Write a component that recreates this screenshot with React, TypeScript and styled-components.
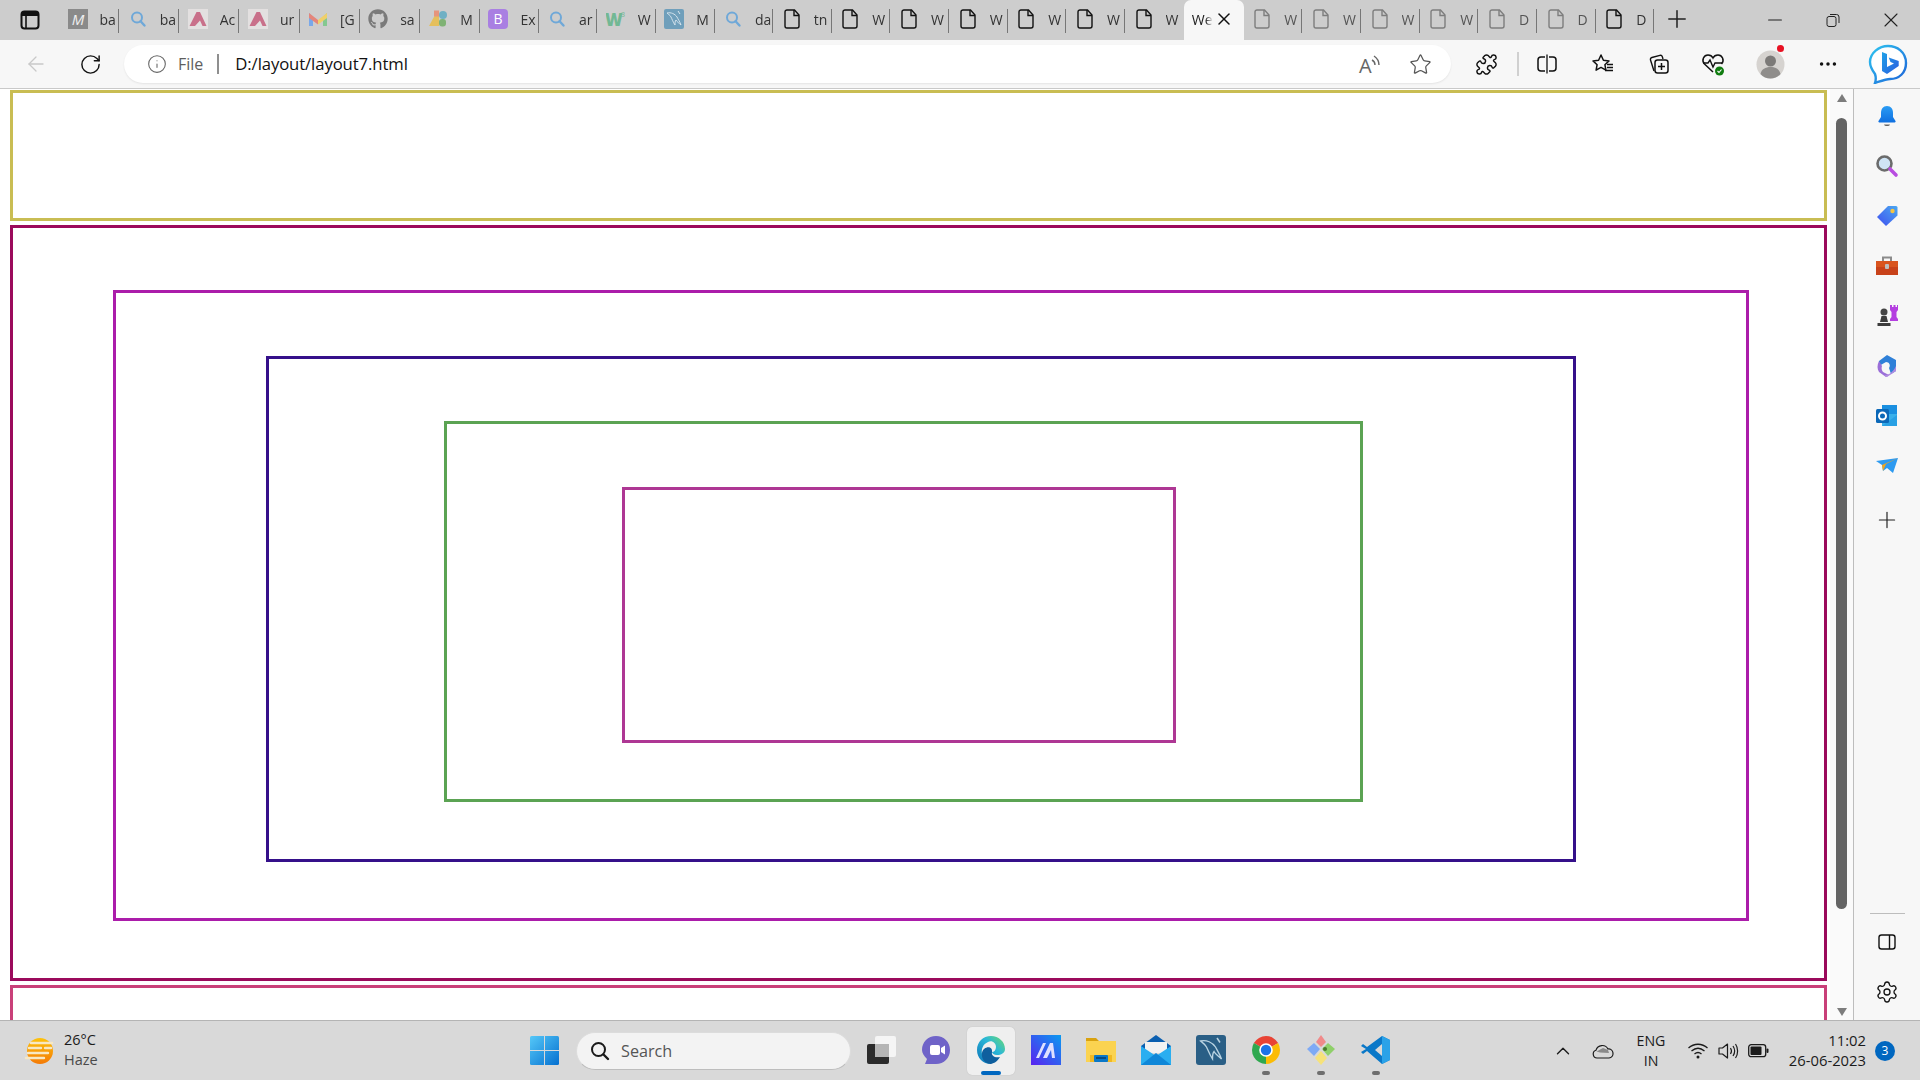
import React from 'react';
import styled, { createGlobalStyle } from 'styled-components';
import { ArrowLeft, RotateCw, Info, Star, Puzzle, MoreHorizontal, Plus, Minus, X, ChevronUp, Settings } from 'lucide-react';
import { FaGithub } from 'react-icons/fa';

const Global = createGlobalStyle`
  html, body { margin: 0; padding: 0; width: 1920px; height: 1080px; overflow: hidden; background: #fff; }
  * { box-sizing: border-box; }
  svg { display: block; flex: none; }
`;

const Screen = styled.div`
  width: 1920px; height: 1080px; display: flex; flex-direction: column; overflow: hidden;
  font-family: "Open Sans", "Noto Sans", sans-serif; color: #1b1b1b;
`;

/* ---------- tab strip ---------- */
const TabStrip = styled.div`display: flex; height: 40px; background: #cdcdcd; flex: none;`;
const StripButton = styled.div`
  width: 59px; display: flex; align-items: center; justify-content: center;
`;
const Tabs = styled.div`display: flex; width: 1595px; flex: none;`;
const Tab = styled.div<{ $dim?: boolean; $sep?: boolean; $wide?: boolean }>`
  width: ${p => (p.$wide ? 60.14 : 58.67)}px; flex: none; position: relative; display: flex; align-items: center; gap: 12px;
  padding: 0 1px 2px 8.5px; overflow: hidden; white-space: nowrap; font-size: 14px;
  color: ${p => (p.$dim ? '#555' : '#333')};
  & > svg { opacity: ${p => (p.$dim ? 0.42 : 1)}; }
  &::after {
    content: ${p => (p.$sep === false ? 'none' : '""')}; position: absolute; right: 0; top: 9px; bottom: 7px; width: 1px; background: #777;
  }
`;
const TabLabel = styled.span`
  flex: 1; min-width: 0; overflow: hidden;
  mask-image: linear-gradient(to right, #000 85%, transparent);
`;
const ActiveTab = styled.div`
  width: 60px; flex: none; display: flex; align-items: center; justify-content: space-between;
  padding: 0 9.5px 2px 8px; background: #f7f7f7; border-radius: 7px 7px 0 0; font-size: 14px; color: #222;
`;
const ActiveLabel = styled.span`
  white-space: nowrap;
  mask-image: linear-gradient(to right, #000 65%, transparent);
`;
const NewTab = styled.div`width: 46px; display: flex; align-items: center; justify-content: center; padding-bottom: 2px;`;
const WindowControls = styled.div`flex: 1; display: flex; padding-left: 46px;`;
const WinButton = styled.div`
  width: 58px; flex: none; display: flex; align-items: center; justify-content: center; padding-bottom: 1px;
`;

/* ---------- toolbar ---------- */
const Toolbar = styled.div`
  height: 49px; flex: none; display: flex; align-items: center; padding-left: 8px;
  background: #f7f7f7; border-bottom: 1px solid #c9c9c9;
`;
const Slot = styled.div<{ $w: number }>`
  width: ${p => p.$w}px; flex: none; height: 38px; display: flex; align-items: center; justify-content: center; position: relative;
`;
const Address = styled.div`
  width: 1327px; height: 38px; margin: 0 8px 0 6px; flex: none; display: flex; align-items: center;
  padding-left: 23px; background: #fff; border-radius: 19px; box-shadow: 0 1px 2px rgba(0,0,0,.08);
`;
const Scheme = styled.span`font-size: 16px; color: #5e5e5e; margin-left: 11px;`;
const AddressBar = styled.span`width: 2px; height: 20px; background: #8f8f8f; margin: 0 16px 0 14px;`;
const Url = styled.span`font-size: 16.7px; color: #111; flex: 1; letter-spacing: -.1px; margin-bottom: 2px;`;
const AddressAction = styled.div<{ $w: number }>`
  width: ${p => p.$w}px; display: flex; justify-content: center; flex: none;
`;
const ToolbarDivider = styled.span`width: 2px; height: 24px; background: #d0d0d0; margin-left: 4px; flex: none;`;
const Notify = styled.span`
  position: absolute; left: 37px; top: 0; width: 7px; height: 7px; border-radius: 50%; background: #e81123;
`;

/* ---------- main ---------- */
const Main = styled.div`flex: 1; min-height: 0; display: flex;`;
const Page = styled.div`
  width: 1830px; flex: none; background: #fff; overflow: hidden; padding: 1px 0 0 10px;
`;
const Frame = styled.div<{ $c: string; $m?: string; $h?: number }>`
  box-sizing: content-box; border: 3px solid ${p => p.$c};
  margin: ${p => p.$m ?? '0'};
  ${p => (p.$h ? `height: ${p.$h}px;` : '')}
`;
const Header = styled(Frame)`width: 1811px;`;
const Section = styled(Frame)`width: 1811px;`;
const Scrollbar = styled.div`
  width: 23px; flex: none; background: #fafafa; display: flex; flex-direction: column; align-items: center;
  padding: 5px 0 4px;
`;
const ScrollArrow = styled.div<{ $down?: boolean }>`
  width: 0; height: 0; border-left: 5.5px solid transparent; border-right: 5.5px solid transparent;
  ${p => (p.$down ? 'border-top: 8px solid #7d7d7d;' : 'border-bottom: 8px solid #7d7d7d;')}
`;
const Thumb = styled.div`width: 11px; height: 791px; border-radius: 6px; background: #646464; margin: 16px 0 0;`;
const ScrollGap = styled.div`flex: 1;`;
const Sidebar = styled.div`
  flex: 1; background: #f7f7f7; border-left: 1px solid #bdbdbd; display: flex; flex-direction: column; align-items: center;
  padding-top: 2px;
`;
const SideItem = styled.div<{ $h?: number }>`
  height: ${p => p.$h ?? 50}px; width: 100%; display: flex; align-items: center; justify-content: center; flex: none;
`;
const SideAdd = styled(SideItem)`margin-top: 4px;`;
const SideDivider = styled.div`width: 35px; height: 1px; background: #bdbdbd; margin-top: auto; flex: none;`;
const SideBottom = styled.div`width: 100%; padding-bottom: 6px;`;

/* ---------- taskbar ---------- */
const Taskbar = styled.div`
  height: 60px; flex: none; display: grid; grid-template-columns: 530px 1000px 390px;
  background: #d9d9d9; border-top: 1px solid #b4b4b4;
`;
const Weather = styled.div`display: flex; align-items: center; padding-left: 24px; gap: 8px;`;
const TwoLine = styled.div`display: flex; flex-direction: column; font-size: 14.5px; line-height: 20px; margin-top: -2px;`;
const MutedLine = styled.span`color: #4a4a4a;`;
const Center = styled.div`display: flex; align-items: center;`;
const SearchBox = styled.div`
  width: 275px; height: 38px; margin: 0 2px 0 17px; border-radius: 19px; background: #f3f3f3; border: 1px solid #dcdcdc;
  border-bottom-color: #bdbdbd; display: flex; align-items: center; padding-left: 12px; gap: 10px; font-size: 16.2px; color: #555;
`;
const TaskSlot = styled.div`width: 55px; height: 100%; display: flex; align-items: center; justify-content: center; flex: none;`;
const Tile = styled.div<{ $active?: boolean }>`
  width: 48px; height: 48px; border-radius: 5px; position: relative; display: flex; align-items: center; justify-content: center;
  padding-bottom: 1px;
  background: ${p => (p.$active ? '#efefef' : 'transparent')};
  ${p => (p.$active ? 'box-shadow: 0 0 1px rgba(0,0,0,.2);' : '')}
`;
const Running = styled.span<{ $active?: boolean }>`
  position: absolute; bottom: 0; left: 50%; transform: translateX(-50%);
  height: 4px; border-radius: 2px; width: ${p => (p.$active ? 20 : 8)}px;
  background: ${p => (p.$active ? '#0067c0' : '#6e6e6e')};
`;
const Tray = styled.div`display: flex; align-items: center; padding-left: 13px;`;
const Lang = styled(TwoLine)`width: 56px; align-items: center; flex: none; font-size: 14.2px; margin-top: 0;`;
const Clock = styled(TwoLine)`width: 89px; align-items: flex-end; flex: none; white-space: nowrap; font-size: 14.8px;`;
const Badge = styled.div`
  width: 20px; height: 20px; border-radius: 50%; background: #0067c0; color: #fff; margin-left: 9px; font-size: 12px;
  display: flex; align-items: center; justify-content: center; flex: none;
`;

/* ---------- icons ---------- */
const Svg = ({ s = 20, w, h, children, vb }: any) => (
  <svg width={w ?? s} height={h ?? s} viewBox={vb ?? `0 0 ${w ?? s} ${h ?? s}`} fill="none">{children}</svg>
);
const TabsIcon = () => (
  <Svg s={20}>
    <rect x="1.5" y="1.5" width="17" height="17" rx="3" stroke="#111" strokeWidth="2" />
    <rect x="2" y="2" width="16" height="4" fill="#111" />
    <path d="M6 5v13" stroke="#111" strokeWidth="1.6" />
  </Svg>
);
const GreyM = () => (
  <Svg s={20}>
    <rect width="20" height="20" fill="#8a8a8a" />
    <text x="10" y="15.5" textAnchor="middle" fontFamily="Open Sans" fontStyle="italic" fontSize="15" fill="#eee">M</text>
  </Svg>
);
const TabSearch = () => (
  <Svg s={20}>
    <circle cx="9" cy="8.5" r="5" stroke="#6fa8d8" strokeWidth="2" />
    <path d="M12.6 12.2 16.5 16.5" stroke="#6fa8d8" strokeWidth="2.4" strokeLinecap="round" />
  </Svg>
);
const AdobeA = () => (
  <Svg s={20}>
    <rect width="20" height="20" fill="#e3e0e0" />
    <path d="M8.500 3h3.500l6.500 14h-4l-2.500-5.500L7 17H1.500z" fill="#c9708a" />
  </Svg>
);
const Gmail = () => (
  <Svg s={20}>
    <path d="M1 4v13h4V8z" fill="#79a8ea" />
    <path d="M19 4v13h-4V8z" fill="#84c890" />
    <path d="M1 4l9 7v4.500L1 9z" fill="#e4857a" />
    <path d="M19 4l-9 7v4.500L19 9z" fill="#efcf6a" />
  </Svg>
);
const ColorBlocks = () => (
  <Svg s={20}>
    <path d="M1 17 7 6h4v11z" fill="#e5bf5c" />
    <rect x="6" y="1.5" width="5" height="6" fill="#e6947c" />
    <circle cx="15" cy="6" r="4" fill="#6fb0c4" />
    <rect x="11" y="10" width="7" height="7.5" rx="3" fill="#7fb274" />
  </Svg>
);
const Bootstrap = () => (
  <Svg s={20}>
    <rect width="20" height="20" rx="4" fill="#a97fe2" />
    <text x="10" y="15" textAnchor="middle" fontFamily="Open Sans" fontSize="14" fill="#fff">B</text>
  </Svg>
);
const W3 = () => (
  <Svg s={20}>
    <text x="-1" y="17" fontFamily="Open Sans" fontWeight="800" fontSize="17" fill="#72b894">W</text>
    <text x="15" y="8" fontFamily="Open Sans" fontSize="7" fill="#72b894">3</text>
  </Svg>
);
const Dolphin = ({ s = 20, bg = '#6f9fbb', fg = '#dbe8ef' }: any) => (
  <Svg w={s} h={s} vb="0 0 20 20">
    <rect width="20" height="20" rx="2" fill={bg} />
    <path d="M3 4c4-1 8 1 10 4 1 2 3 5 4 8-2-2-4-3-5-5-1 1-1 3-1 5-2-3-3-6-4-8C6 6 4 5 3 4z" stroke={fg} strokeWidth=".9" />
    <path d="M14 2l2 3" stroke={fg} strokeWidth="1" />
  </Svg>
);
const Doc = () => (
  <Svg s={20}>
    <path d="M3 3A2 2 0 0 1 5 1h7.500L17 6v11a2 2 0 0 1-2 2H5a2 2 0 0 1-2-2z" stroke="#111" strokeWidth="1.400" />
    <path d="M12 1v5.500h5" stroke="#111" strokeWidth="1.400" />
  </Svg>
);
const RestoreIcon = () => (
  <Svg s={14}>
    <rect x="1" y="3.500" width="9" height="10" rx="2" stroke="#222" />
    <path d="M4 1.500h6.500A2.500 2.500 0 0 1 13 4v6" stroke="#222" />
  </Svg>
);
const ReadAloud = () => (
  <Svg s={24}>
    <text x="1" y="21" fontFamily="Open Sans" fontSize="20" fill="#666">A</text>
    <path d="M14 8c2 1 3 3 3 5M16 4c3 2 5 5 5 9" stroke="#666" strokeWidth="1.400" />
  </Svg>
);
const SplitIcon = () => (
  <Svg s={22}>
    <rect x="2" y="4" width="18" height="14" rx="3" stroke="#111" strokeWidth="1.500" />
    <path d="M11 1.500v19" stroke="#f7f7f7" strokeWidth="4" />
    <path d="M11 1.500v19" stroke="#111" strokeWidth="1.300" />
  </Svg>
);
const FavList = () => (
  <Svg s={24}>
    <path d="M10 3l2.400 5.200 5.600.7-4.100 3.800 1 5.500-4.900-2.800-4.900 2.800 1-5.500L2 8.900l5.600-.7z" stroke="#111" strokeWidth="1.500" strokeLinejoin="round" />
    <path d="M16 12.500h6M16 15.500h6M14 18.500h8" stroke="#111" strokeWidth="1.300" />
  </Svg>
);
const Collections = () => (
  <Svg s={24}>
    <path d="M7 19 3.500 8a2 2 0 0 1 1.400-2.500l8-2.200a2 2 0 0 1 2.400 1.300L16 7" stroke="#111" strokeWidth="1.400" />
    <rect x="8" y="8" width="13" height="13" rx="2.500" fill="#f7f7f7" stroke="#111" strokeWidth="1.500" />
    <path d="M14.500 11v7M11 14.500h7" stroke="#111" strokeWidth="1.500" />
  </Svg>
);
const Health = () => (
  <Svg s={26}>
    <path d="M13 21 4.500 13C1 9 4 4 8 4c2.200 0 4 1 5 3 1-2 2.800-3 5-3 4 0 7 5 3.500 9" stroke="#111" strokeWidth="1.500" />
    <path d="M3 12h5l2-3 3 7 2-4h7" stroke="#111" strokeWidth="1.400" fill="#f7f7f7" />
    <circle cx="19.500" cy="20" r="4.500" fill="#107c10" />
    <path d="M17.500 20l1.500 1.500 2.500-3" stroke="#fff" strokeWidth="1.100" />
  </Svg>
);
const Avatar = () => (
  <Svg s={29}>
    <circle cx="14.500" cy="14.500" r="14" fill="#d6d3d0" />
    <circle cx="14.500" cy="11" r="5.500" fill="#7c7a78" />
    <path d="M4.500 24c1-5 5-7 10-7s9 2 10 7c-5 6-15 6-20 0z" fill="#8f8d8b" />
  </Svg>
);
const Bing = () => (
  <Svg w={40} h={40}>
    <defs>
      <linearGradient id="bing" x1="0" y1="0" x2="1" y2="1">
        <stop offset="0" stopColor="#2ec4f0" />
        <stop offset="1" stopColor="#1d63d8" />
      </linearGradient>
      <linearGradient id="bingB" x1="0" y1="0" x2="1" y2="1">
        <stop offset="0" stopColor="#1fa2e8" />
        <stop offset="1" stopColor="#2a5de0" />
      </linearGradient>
    </defs>
    <path d="M20 2C29 2 38 8 38 19c0 10-7 16-16 16-4 0-9 2-15 4 1-3 1-6 0-9-3-4-5-7-5-12C2 9 11 2 20 2z" fill="#fff" stroke="url(#bing)" strokeWidth="2.400" />
    <path d="M14 8l5 2v13l7-3.500-3.500-1.500-1.800-4.500 10 3.500v5L19 30l-5-3z" fill="url(#bingB)" />
  </Svg>
);
const Bell = () => (
  <Svg s={24}>
    <defs>
      <linearGradient id="bell" x1="0" y1="0" x2="0" y2="1"><stop offset="0" stopColor="#2a9cf4" /><stop offset="1" stopColor="#0f6fe0" /></linearGradient>
    </defs>
    <path d="M12 2c4 0 6 3 6 7v4l2.500 4a1 1 0 0 1-1 1.500h-15a1 1 0 0 1-1-1.500L6 13V9c0-4 2-7 6-7z" fill="url(#bell)" />
    <path d="M9 20.500h6c-.5 2-5.500 2-6 0z" fill="#666" />
  </Svg>
);
const Lens = () => (
  <Svg s={24}>
    <circle cx="9.500" cy="9.500" r="7" fill="#cfe4f5" stroke="#6b6b6b" strokeWidth="2.600" />
    <path d="M15 15l6 6" stroke="#b84de0" strokeWidth="3.600" strokeLinecap="round" />
  </Svg>
);
const TagIcon = () => (
  <Svg s={24}>
    <defs>
      <linearGradient id="tag" x1="1" y1="0" x2="0" y2="1"><stop offset="0" stopColor="#4ba8f0" /><stop offset="1" stopColor="#3f4ff0" /></linearGradient>
    </defs>
    <path d="M13 2h8a1.500 1.500 0 0 1 1.500 1.500v8L11 22 2 13z" fill="url(#tag)" />
    <circle cx="17.500" cy="7" r="2.200" fill="#f5c542" />
  </Svg>
);
const Toolbox = () => (
  <Svg s={24}>
    <path d="M8 7V3.500h8V7" stroke="#8b8b8b" strokeWidth="2" />
    <path d="M1 7h22v6H1z" fill="#d9541e" />
    <path d="M1 13h22v8H1z" fill="#c8421a" />
    <rect x="10" y="10" width="4" height="5" rx="1" fill="#bdbdbd" />
  </Svg>
);
const Chess = () => (
  <Svg s={24}>
    <circle cx="9" cy="8" r="3.500" fill="#444" />
    <path d="M6.500 12h5l1.500 6h-8zM2.500 19h13v3h-13z" fill="#3c3c3c" />
    <path d="M15 1h2v2h1.500V1h2v2H22V1h1v5l-1.500 2v5l1.500 2v2h-8v-2l1.500-2V8L15 6z" fill="#b43fe0" />
  </Svg>
);
const Office = () => (
  <Svg s={24}>
    <path d="M12 1l9 5v11l-5 3-2-6c2-3 0-6-3-6L4 12V7z" fill="#2f80d8" />
    <path d="M4 7c-2 4-2 8 0 11l7 5 3-2-4-2c-3-1-4-4-3-7z" fill="#9b6fd8" />
    <path d="M21 12v5l-9 6-3-2c4 0 8-1 12-9z" fill="#b08ae0" />
  </Svg>
);
const Outlook = () => (
  <Svg s={24}>
    <rect x="7" y="1" width="15" height="11" fill="#1a8fe0" />
    <path d="M7 10h15v12H7z" fill="#39b0ea" />
    <path d="M7 22l15-11v11z" fill="#28a0e4" />
    <rect x="1" y="5" width="13" height="14" rx="1.500" fill="#0b68b8" />
    <circle cx="7.500" cy="12" r="3.500" stroke="#fff" strokeWidth="2" />
  </Svg>
);
const SendIcon = () => (
  <Svg s={24} vb="0 -1 24 24">
    <path d="M1 6l22-3-5 15-6-5-4 3-1-6z" fill="#2d9af0" />
    <path d="M23 3 7 10l1 6 3-7z" fill="#f2a51c" />
  </Svg>
);
const PanelIcon = () => (
  <Svg s={20}>
    <rect x="2" y="3" width="16" height="14" rx="2.500" stroke="#111" strokeWidth="1.400" />
    <path d="M12.500 3v14" stroke="#111" strokeWidth="1.400" />
  </Svg>
);
const WeatherIcon = () => (
  <Svg s={32}>
    <defs>
      <linearGradient id="sun" x1="0" y1="0" x2="0" y2="1"><stop offset="0" stopColor="#fdc20c" /><stop offset="1" stopColor="#f47a06" /></linearGradient>
    </defs>
    <circle cx="16" cy="16" r="13" fill="url(#sun)" />
    <path d="M7 8h21M5 13h12M21 13h6M4 18h20M2 23h18" stroke="#f7e8c4" strokeWidth="2.400" strokeLinecap="round" />
  </Svg>
);
const WinLogo = () => (
  <Svg s={29}>
    <defs>
      <linearGradient id="win" x1="0" y1="0" x2="1" y2="1"><stop offset="0" stopColor="#55c8f8" /><stop offset="1" stopColor="#0570d0" /></linearGradient>
    </defs>
    <rect width="29" height="29" fill="url(#win)" rx="1.500" />
    <path d="M14.500 0v29M0 14.500h29" stroke="#d9d9d9" strokeWidth="1" />
  </Svg>
);
const SearchGlass = () => (
  <Svg s={22}>
    <circle cx="9.500" cy="9.500" r="6.500" stroke="#1a1a1a" strokeWidth="2" />
    <path d="M14.500 14.500 19 19" stroke="#1a1a1a" strokeWidth="2.400" strokeLinecap="round" />
  </Svg>
);
const TaskView = () => (
  <Svg s={30}>
    <rect x="9" y="1" width="21" height="21" rx="2" fill="#f5f5f5" />
    <rect x="1" y="9" width="22" height="20" rx="2" fill="#2b2b2b" />
    <path d="M9 9h14v13H9z" fill="#b5b5b5" />
  </Svg>
);
const Meet = () => (
  <Svg s={30}>
    <path d="M15 1c8 0 14 6 14 14s-6 14-14 14H4l2-5C3 21 1 18 1 15 1 7 7 1 15 1z" fill="#6f63c8" />
    <rect x="9" y="10" width="10" height="10" rx="2" fill="#fff" />
    <path d="M20 13l4-2.500v9L20 17z" fill="#fff" />
  </Svg>
);
const Edge = () => (
  <Svg s={30}>
    <defs>
      <linearGradient id="edgeA" x1="0" y1="1" x2="1" y2="0"><stop offset="0" stopColor="#0c72b8" /><stop offset=".6" stopColor="#2bb8d8" /><stop offset="1" stopColor="#6fdc6a" /></linearGradient>
    </defs>
    <path d="M15 1c8 0 14 6 14 13 0 4-4 6-8 6-3 0-5-1.500-5-3 2 0 4-2 4-5 0-4-4-7-8-5-5 2-7 7-6 12 1 5 5 9 9 10C7 29 1 23 1 15 1 7 7 1 15 1z" fill="url(#edgeA)" />
    <path d="M6 18c1-7 11-8 10-1-1 4 3 6 8 5-3 5-7 7-10 7-5-1-9-5-8-11z" fill="#0f5f9e" />
  </Svg>
);
const MsApp = () => (
  <Svg s={30}>
    <defs>
      <linearGradient id="ms" x1="0" y1="1" x2="1" y2="0"><stop offset="0" stopColor="#5a22f0" /><stop offset="1" stopColor="#0a9af0" /></linearGradient>
    </defs>
    <rect width="30" height="30" fill="url(#ms)" />
    <path d="M5 23 12 8h3L8 23zM12 23l7-15h3l2 15h-3l-1-8-4 8z" fill="#dfe0ff" />
  </Svg>
);
const Folder = () => (
  <Svg s={30}>
    <path d="M0 3h10l3 3h17v4H0z" fill="#d9a20f" />
    <path d="M0 6h30v21H0z" fill="#fbd350" />
    <path d="M3 27v-6a2 2 0 0 1 2-2h6v8z" fill="#fbd350" />
    <rect x="4" y="20" width="22" height="7" fill="#f0b822" />
    <rect x="8" y="20" width="14" height="7" rx="1" fill="#0a78c8" />
    <path d="M10 23h10" stroke="#083e6e" strokeWidth="1.500" />
  </Svg>
);
const Mail = () => (
  <Svg s={30}>
    <path d="M0 11 15 0l15 11v4H0z" fill="#0b5fb0" />
    <path d="M4 7h22v11H4z" fill="#f2f2f2" />
    <path d="M0 11l15 10 15-10v19H0z" fill="#2aaef0" />
    <path d="M0 30 15 18l15 12z" fill="#0f87d8" />
  </Svg>
);
const Chrome = () => (
  <Svg s={30}>
    <path d="M15 15 2.880 8A14 14 0 0 1 27.120 8z" fill="#e84335" />
    <path d="M15 15 15 29A14 14 0 0 1 2.880 8z" fill="#2fa84f" />
    <path d="M15 15 27.120 8A14 14 0 0 1 15 29z" fill="#fbbc05" />
    <circle cx="15" cy="15" r="6.800" fill="#fff" />
    <circle cx="15" cy="15" r="5.200" fill="#1a73e8" />
  </Svg>
);
const GitKraken = () => (
  <Svg s={30}>
    <path d="M15 0l5 7-5 5-5-5z" fill="#f08a8a" />
    <path d="M8 8l6 6-6 7-7-7z" fill="#7eaaf5" />
    <path d="M22 8l7 6-7 7-6-7z" fill="#8fd06a" />
    <path d="M15 16l6 7-6 7-6-7z" fill="#f6e27a" />
    <circle cx="19" cy="14" r="2" fill="#4b7a2e" />
  </Svg>
);
const VSCode = () => (
  <Svg s={30}>
    <path d="M21 1l8 4v20l-8 4L6 16 2 19l-2-2 5-3-5-3 2-2 4 3z" fill="#0a78c8" />
    <path d="M21 1l8 4v20l-8 4z" fill="#2aa2e8" />
    <path d="M21 9l-7 6 7 6z" fill="#d9d9d9" />
  </Svg>
);
const Cloud = () => (
  <Svg w={22} h={16}>
    <path d="M5 15a4 4 0 0 1-1-7.800A6.500 6.500 0 0 1 16 6a4.500 4.500 0 0 1 1 9z" fill="#d9d9d9" stroke="#1b1b1b" strokeWidth="1.200" />
    <path d="M4.500 8.500 11 5l5 2 1 3-9-.5z" fill="#8a8a8a" />
  </Svg>
);
const Wifi = () => (
  <Svg s={22}>
    <path d="M1.500 8c5.500-5 13.500-5 19 0M4.500 11c4-3.400 9-3.400 13 0M7.500 14c2-1.700 5-1.700 7 0" stroke="#1b1b1b" strokeWidth="1.300" />
    <circle cx="11" cy="17" r="1.500" fill="#1b1b1b" />
  </Svg>
);
const Volume = () => (
  <Svg s={22}>
    <path d="M2 8v6h3.500l5 4V4l-5 4z" stroke="#1b1b1b" strokeWidth="1.200" strokeLinejoin="round" />
    <path d="M13.500 8c1.300 2 1.300 4 0 6M16 6c2 3 2 7 0 10M18.500 4c2.800 4 2.800 10 0 14" stroke="#1b1b1b" strokeWidth="1.200" />
  </Svg>
);
const Battery = () => (
  <Svg w={21} h={14}>
    <rect x=".7" y=".7" width="17" height="12" rx="2.500" stroke="#1b1b1b" strokeWidth="1.300" />
    <rect x="2.500" y="2.500" width="11" height="8.500" rx="1" fill="#1b1b1b" />
    <rect x="18.500" y="4.500" width="2" height="4.500" rx="1" fill="#1b1b1b" />
  </Svg>
);

type TabData = { icon: React.ReactNode; text: string; dim?: boolean };
const doc = <Doc />;
const before: TabData[] = [
  { icon: <GreyM />, text: 'ba' },
  { icon: <TabSearch />, text: 'ba' },
  { icon: <AdobeA />, text: 'Ac' },
  { icon: <AdobeA />, text: 'ur' },
  { icon: <Gmail />, text: '[G' },
  { icon: <FaGithub size={20} color="#7a7a7a" />, text: 'sa' },
  { icon: <ColorBlocks />, text: 'M' },
  { icon: <Bootstrap />, text: 'Ex' },
  { icon: <TabSearch />, text: 'ar' },
  { icon: <W3 />, text: 'W' },
  { icon: <Dolphin />, text: 'M' },
  { icon: <TabSearch />, text: 'da' },
  { icon: doc, text: 'tn' },
  { icon: doc, text: 'W' },
  { icon: doc, text: 'W' },
  { icon: doc, text: 'W' },
  { icon: doc, text: 'W' },
  { icon: doc, text: 'W' },
  { icon: doc, text: 'W' },
];
const after: TabData[] = [
  { icon: doc, text: 'W', dim: true },
  { icon: doc, text: 'W', dim: true },
  { icon: doc, text: 'W', dim: true },
  { icon: doc, text: 'W', dim: true },
  { icon: doc, text: 'D', dim: true },
  { icon: doc, text: 'D', dim: true },
  { icon: doc, text: 'D' },
];

const sideIcons = [<Bell />, <Lens />, <TagIcon />, <Toolbox />, <Chess />, <Office />, <Outlook />, <SendIcon />];
const appIcons: { icon: React.ReactNode; run?: boolean; active?: boolean }[] = [
  { icon: <TaskView /> },
  { icon: <Meet /> },
  { icon: <Edge />, run: true, active: true },
  { icon: <MsApp /> },
  { icon: <Folder /> },
  { icon: <Mail /> },
  { icon: <Dolphin s={30} bg="#2a5f86" fg="#b9d3e2" /> },
  { icon: <Chrome />, run: true },
  { icon: <GitKraken />, run: true },
  { icon: <VSCode />, run: true },
];

export default function App() {
  return (
    <Screen>
      <Global />
      <TabStrip>
        <StripButton><TabsIcon /></StripButton>
        <Tabs>
          {before.map((t, i) => (
            <Tab key={i} $wide={i < 7} $dim={t.dim} $sep={i !== before.length - 1}>{t.icon}<TabLabel>{t.text}</TabLabel></Tab>
          ))}
          <ActiveTab><ActiveLabel>We</ActiveLabel><X size={20} color="#111" strokeWidth={1.800} /></ActiveTab>
          {after.map((t, i) => (
            <Tab key={i} $dim={t.dim}>{t.icon}<TabLabel>{t.text}</TabLabel></Tab>
          ))}
        </Tabs>
        <NewTab><Plus size={28} color="#222" strokeWidth={1.300} /></NewTab>
        <WindowControls>
          <WinButton><Minus size={22} color="#222" strokeWidth={1.100} /></WinButton>
          <WinButton><RestoreIcon /></WinButton>
          <WinButton><X size={24} color="#222" strokeWidth={1.100} /></WinButton>
        </WindowControls>
      </TabStrip>

      <Toolbar>
        <Slot $w={55}><ArrowLeft size={24} color="#c9c9c9" strokeWidth={1.300} /></Slot>
        <Slot $w={55}><RotateCw size={23} color="#111" strokeWidth={1.500} /></Slot>
        <Address>
          <Info size={20} color="#666" strokeWidth={1.300} />
          <Scheme>File</Scheme>
          <AddressBar />
          <Url>D:/layout/layout7.html</Url>
          <AddressAction $w={48}><ReadAloud /></AddressAction>
          <AddressAction $w={52}><Star size={23} color="#555" strokeWidth={1.300} /></AddressAction>
          <AddressAction $w={5} />
        </Address>
        <Slot $w={54}><Puzzle size={23} color="#111" strokeWidth={1.500} /></Slot>
        <ToolbarDivider />
        <Slot $w={56}><SplitIcon /></Slot>
        <Slot $w={56}><FavList /></Slot>
        <Slot $w={55}><Collections /></Slot>
        <Slot $w={54}><Health /></Slot>
        <Slot $w={60}><Avatar /><Notify /></Slot>
        <Slot $w={56}><MoreHorizontal size={22} color="#111" strokeWidth={1.800} /></Slot>
        <Slot $w={64}><Bing /></Slot>
      </Toolbar>

      <Main>
        <Page>
          <Header $c="#c9bd53" $h={125} />
          <Section $c="#9b0a5c" $m="4px 0 0">
            <Frame $c="#ab1daa" $m="62px 75px 57px 100px">
              <Frame $c="#35108a" $m="63px 170px 56px 150px">
                <Frame $c="#5ba353" $m="62px 210px 57px 175px">
                  <Frame $c="#ae3794" $m="63px 184px 56px 175px" $h={250} />
                </Frame>
              </Frame>
            </Frame>
          </Section>
          <Section $c="#c94079" $m="4px 0 0" $h={300} />
        </Page>
        <Scrollbar>
          <ScrollArrow />
          <Thumb />
          <ScrollGap />
          <ScrollArrow $down />
        </Scrollbar>
        <Sidebar>
          {sideIcons.map((ic, i) => <SideItem key={i}>{ic}</SideItem>)}
          <SideAdd><Plus size={26} color="#222" strokeWidth={1.100} /></SideAdd>
          <SideDivider />
          <SideBottom>
            <SideItem $h={56}><PanelIcon /></SideItem>
            <SideItem $h={44}><Settings size={24} color="#111" strokeWidth={1.300} /></SideItem>
          </SideBottom>
        </Sidebar>
      </Main>

      <Taskbar>
        <Weather>
          <WeatherIcon />
          <TwoLine><span>26°C</span><MutedLine>Haze</MutedLine></TwoLine>
        </Weather>
        <Center>
          <WinLogo />
          <SearchBox><SearchGlass /><span>Search</span></SearchBox>
          {appIcons.map((a, i) => (
            <TaskSlot key={i}>
              <Tile $active={a.active}>
                {a.icon}
                {a.run && <Running $active={a.active} />}
              </Tile>
            </TaskSlot>
          ))}
        </Center>
        <Tray>
          <Slot $w={40}><ChevronUp size={22} color="#1b1b1b" strokeWidth={1.500} /></Slot>
          <Slot $w={40}><Cloud /></Slot>
          <Lang><span>ENG</span><span>IN</span></Lang>
          <Slot $w={38}><Wifi /></Slot>
          <Slot $w={22}><Volume /></Slot>
          <Slot $w={38}><Battery /></Slot>
          <Clock><span>11:02</span><span>26-06-2023</span></Clock>
          <Badge>3</Badge>
        </Tray>
      </Taskbar>
    </Screen>
  );
}
